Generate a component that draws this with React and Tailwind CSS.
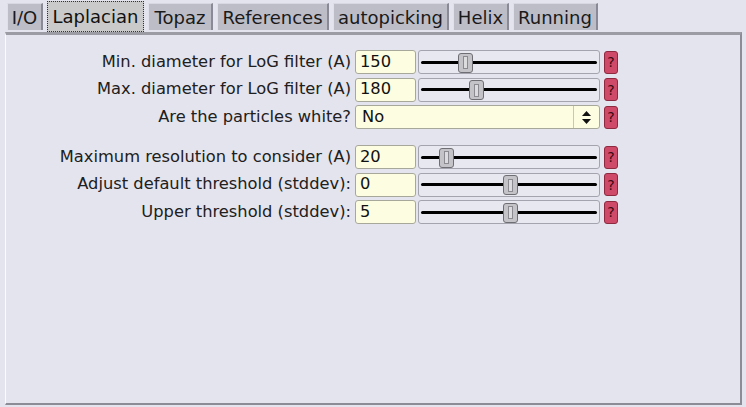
import React from "react";

const tabs = [
  { t: "I/O", w: 36 },
  { t: "Laplacian", w: 97, sel: true },
  { t: "Topaz", w: 65 },
  { t: "References", w: 112 },
  { t: "autopicking", w: 116 },
  { t: "Helix", w: 56 },
  { t: "Running", w: 85 },
];

function Help() {
  return (
    <div className="ml-[4px] w-[14px] h-[23px] rounded-[3px] bg-[#cf4a68] border border-[#8e2a40] flex items-center justify-center text-[14px] leading-none text-[#3a0a14]">
      ?
    </div>
  );
}

function Slider({ knob }) {
  return (
    <div className="relative ml-[2px] w-[182px] h-[24px] rounded-[3px] border border-[#a4a4ae] bg-[#e8e8f0]">
      <div className="absolute left-[2px] right-[2px] top-[9.5px] h-[3px] rounded-full bg-black" />
      <div
        className="absolute top-[1.5px] w-[15px] h-[20px] rounded-[3px] border border-[#6e6e74] bg-[#c4c4c8] flex items-center justify-center"
        style={{ left: knob }}
      >
        <div className="w-[5px] h-[13px] border border-[#8a8a90] bg-[#dcdcdf]" />
      </div>
    </div>
  );
}

function Row({ label, value, knob, className = "" }) {
  return (
    <div className={"flex items-center h-[24px] " + className}>
      <div className="w-[345px] text-right text-[16.3px] text-[#202020] whitespace-nowrap">{label}</div>
      <div className="ml-[4px] w-[61px] h-[24px] rounded-[3px] border border-[#a8a89a] bg-[#fdfde2] flex items-center pl-[4px] text-[16.3px] text-[#111]">
        {value}
      </div>
      <Slider knob={knob} />
      <Help />
    </div>
  );
}

export default function App() {
  return (
    <div className="w-[746px] h-[407px] bg-[#e4e4ee] flex flex-col font-['DejaVu_Sans',sans-serif] overflow-hidden">
      <div className="flex items-end gap-[4px] pl-[7px] h-[32px] shrink-0">
        {tabs.map((tb) =>
          tb.sel ? (
            <div
              key={tb.t}
              className="h-[31px] flex items-center justify-center bg-[#cacaca] border border-dotted border-[#333] text-[18px] text-[#111]"
              style={{ width: tb.w }}
            >
              {tb.t}
            </div>
          ) : (
            <div
              key={tb.t}
              className="h-[27px] mb-[2px] flex items-center justify-center bg-[#bdbdc8] border-l border-t border-l-[#e0e0ea] border-t-[#d8d8e2] border-r-2 border-r-[#8a8a96] text-[18px] text-[#1a1a1a]"
              style={{ width: tb.w }}
            >
              {tb.t}
            </div>
          )
        )}
      </div>
      <div className="ml-[5px] mr-[4px] mb-[2px] flex-1 border-t-[3px] border-t-[#9c9ca4] border-l border-l-[#fafaff] border-r-2 border-r-[#8c8c96] border-b-2 border-b-[#8c8c96] bg-[#e4e4ee] pt-[15px] flex flex-col gap-[3.5px]">
        <Row label="Min. diameter for LoG filter (A)" value="150" knob={39} />
        <Row label="Max. diameter for LoG filter (A)" value="180" knob={50} />
        <div className="flex items-center h-[24px]">
          <div className="w-[345px] text-right text-[16.3px] text-[#202020]">Are the particles white?</div>
          <div className="ml-[4px] w-[245px] h-[24px] rounded-[3px] border border-[#a8a89a] bg-[#fdfde2] flex items-center text-[16.3px] text-[#111]">
            <div className="flex-1 pl-[6px]">No</div>
            <div className="w-[26px] h-full border-l border-l-[#c8c8b8] flex items-center justify-center">
              <svg width="9" height="13" viewBox="0 0 9 13">
                <path d="M4.5 0 L9 5 L0 5 Z" fill="#111" />
                <path d="M4.5 13 L9 8 L0 8 Z" fill="#111" />
              </svg>
            </div>
          </div>
          <Help />
        </div>
        <Row className="mt-[12.5px]" label="Maximum resolution to consider (A)" value="20" knob={20} />
        <Row label="Adjust default threshold (stddev):" value="0" knob={84} />
        <Row label="Upper threshold (stddev):" value="5" knob={84} />
      </div>
    </div>
  );
}
